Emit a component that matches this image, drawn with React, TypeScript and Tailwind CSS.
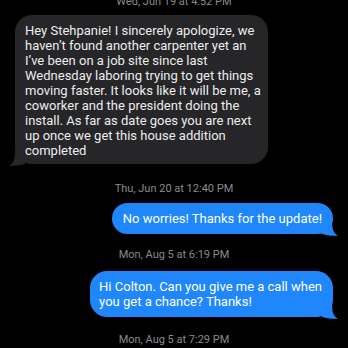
import React from "react";

const font = { fontFamily: "Roboto, 'Noto Sans', sans-serif" };

function Stamp({ text, className = "" }: { text: string; className?: string }) {
  return (
    <div className={`text-center text-[11px] leading-[14px] text-[#8a8a8f] whitespace-nowrap ${className}`}>
      {text}
    </div>
  );
}

function GrayTail() {
  return (
    <svg className="absolute -left-[6px] bottom-[-2px]" width="16" height="16" viewBox="0 0 16 16">
      <path d="M16 0 L16 14 C12 15 6 16 0 16 C5 13 6 8 6 0 Z" fill="#262628" />
    </svg>
  );
}

function BlueTail() {
  return (
    <svg className="absolute -right-[5px] bottom-[-2px]" width="16" height="16" viewBox="0 0 16 16">
      <path d="M0 0 L0 14 C4 15 10 16 16 16 C11 13 10 8 10 0 Z" fill="#1f87fb" />
    </svg>
  );
}

export default function App() {
  return (
    <div className="w-[348px] h-[348px] overflow-hidden bg-black" style={font}>
      <div className="flex flex-col -mt-[5px]">
        <Stamp text="Wed, Jun 19 at 4:52 PM" />
        <div className="mt-[6px] ml-[15px] relative w-[253px]">
          <GrayTail />
          <div className="relative rounded-[17px] bg-[#262628] px-[10px] pt-[8px] pb-[6px] text-[13px] leading-[15px] text-[#ececed] whitespace-nowrap">
            Hey Stehpanie! I sincerely apologize, we
            <br />
            haven’t found another carpenter yet an
            <br />
            I’ve been on a job site since last
            <br />
            Wednesday laboring trying to get things
            <br />
            moving faster. It looks like it will be me, a
            <br />
            coworker and the president doing the
            <br />
            install. As far as date goes you are next
            <br />
            up once we get this house addition
            <br />
            completed
          </div>
        </div>
        <Stamp text="Thu, Jun 20 at 12:40 PM" className="mt-[18px]" />
        <div className="mt-[7px] flex justify-end pr-[15px]">
          <div className="relative">
            <BlueTail />
            <div className="relative rounded-[16px] bg-[#1f87fb] px-[11px] py-[8px] text-[13px] leading-[15px] text-white whitespace-nowrap">
              No worries! Thanks for the update!
            </div>
          </div>
        </div>
        <Stamp text="Mon, Aug 5 at 6:19 PM" className="mt-[14px]" />
        <div className="mt-[9px] flex justify-end pr-[15px]">
          <div className="relative">
            <BlueTail />
            <div className="relative rounded-[17px] bg-[#1f87fb] pl-[9px] pr-[11px] py-[8px] text-[13px] leading-[15px] text-white whitespace-nowrap">
              Hi Colton. Can you give me a call when
              <br />
              you get a chance? Thanks!
            </div>
          </div>
        </div>
        <Stamp text="Mon, Aug 5 at 7:29 PM" className="mt-[16px]" />
      </div>
    </div>
  );
}
